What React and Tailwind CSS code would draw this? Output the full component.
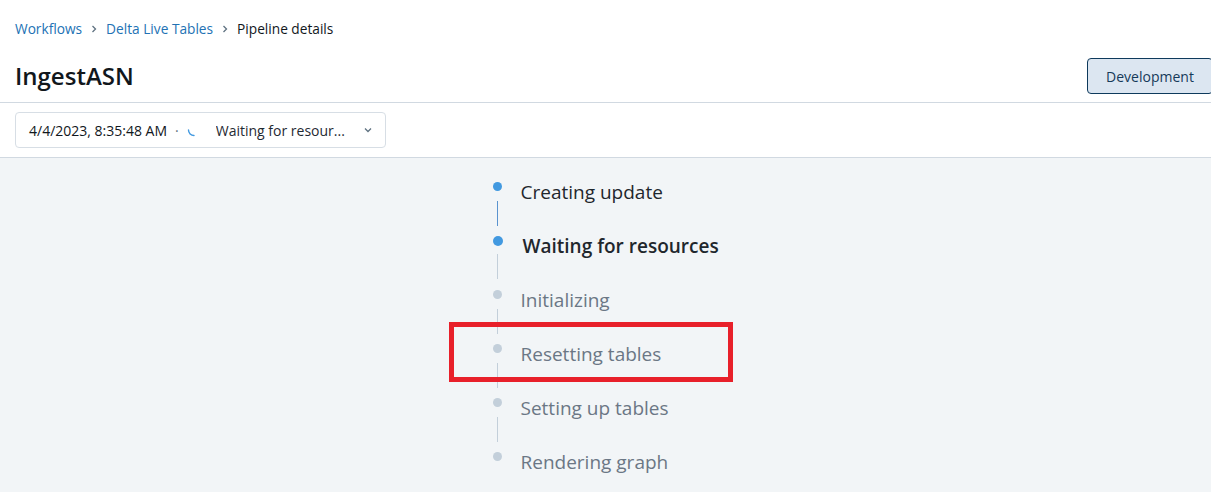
import React from "react";

const steps = [
  { label: "Creating update", state: "done" },
  { label: "Waiting for resources", state: "active" },
  { label: "Initializing", state: "pending" },
  { label: "Resetting tables", state: "pending", boxed: true },
  { label: "Setting up tables", state: "pending" },
  { label: "Rendering graph", state: "pending" },
];

function Chevron() {
  return (
    <svg width="10" height="10" viewBox="0 0 10 10" className="mx-[7px] text-[#5f7281]">
      <path d="M3.5 2 L6.5 5 L3.5 8" fill="none" stroke="currentColor" strokeWidth="1.3" />
    </svg>
  );
}

export default function App() {
  return (
    <div
      className="w-[1211px] h-[492px] overflow-hidden bg-white flex flex-col"
      style={{ fontFamily: '"Open Sans", "Noto Sans", sans-serif' }}
    >
      <div className="flex items-center h-[58px] pl-[15px] text-[13.7px] text-[#11171c]">
        <span className="text-[#2272b4]">Workflows</span>
        <Chevron />
        <span className="text-[#2272b4]">Delta Live Tables</span>
        <Chevron />
        <span>Pipeline details</span>
      </div>
      <div className="flex items-start justify-between h-[45px] pl-[15px] border-b border-[#d1d9e1]">
        <h1 className="text-[24px] leading-[38px] font-semibold text-[#11171c] -mt-[1px]">IngestASN</h1>
        <button className="h-[36px] w-[126px] -mr-[2px] rounded-[4px] border border-[#0e3a5c] bg-[#dce6f1] text-[14px] text-[#163a5a]">
          Development
        </button>
      </div>
      <div className="h-[55px] pl-[15px] pt-[9px] border-b border-[#d1d9e1]">
        <div className="flex items-center h-[36px] w-[371px] rounded-[4px] border border-[#d7dee5] pl-[13px] pr-[12px] text-[14px] text-[#11171c]">
          <span>4/4/2023, 8:35:48 AM</span>
          <span className="ml-[8px] text-[#5f7281]">·</span>
          <svg width="14" height="14" viewBox="0 0 14 14" className="ml-[8px]">
            <path d="M1.5 7 A5.5 5.5 0 0 0 7 12.5" fill="none" stroke="#4299e0" strokeWidth="1.4" strokeLinecap="round" />
          </svg>
          <span className="ml-[15px] flex-1 truncate text-[#1f2a33]">Waiting for resour...</span>
          <svg width="10" height="10" viewBox="0 0 10 10" className="text-[#5f7281]">
            <path d="M2 3.5 L5 6.5 L8 3.5" fill="none" stroke="currentColor" strokeWidth="1.3" />
          </svg>
        </div>
      </div>
      <div className="flex-1 bg-[#f2f5f7] pt-[6px]">
        <div className="w-[226px] mx-auto flex flex-col">
          {steps.map((s, i) => {
            const isLast = i === steps.length - 1;
            const dotClass =
              s.state === "active"
                ? "w-[10px] h-[10px] mt-[18px] bg-[#4299e0]"
                : s.state === "done"
                ? "w-[9px] h-[9px] mt-[18px] bg-[#4299e0]"
                : "w-[9px] h-[9px] mt-[18px] bg-[#c3cfda]";
            const lineClass = s.state === "done" ? "bg-[#5a93cf]" : "bg-[#c3cfda]";
            const textClass =
              s.state === "active"
                ? "font-semibold text-[#1f272d] ml-[20px]"
                : s.state === "done"
                ? "text-[#1f272d] ml-[18px]"
                : "text-[#6b7785] ml-[18px]";
            return (
              <div key={s.label} className="relative flex items-start h-[54px]">
                <div className="w-[10px] flex flex-col items-center shrink-0">
                  <div className={"rounded-full " + dotClass} />
                  {!isLast && (
                    <div className={"w-px h-[25px] " + lineClass + (s.state === "active" ? " mt-[8px]" : " mt-[10px]")} />
                  )}
                </div>
                <span className={"text-[19px] leading-[54px] mt-[1px] whitespace-nowrap " + textClass}>{s.label}</span>
                {s.boxed && (
                  <div className="absolute left-[-44px] top-[-4px] w-[284px] h-[60px] border-[5px] border-[#e8202a]" />
                )}
              </div>
            );
          })}
        </div>
      </div>
    </div>
  );
}
